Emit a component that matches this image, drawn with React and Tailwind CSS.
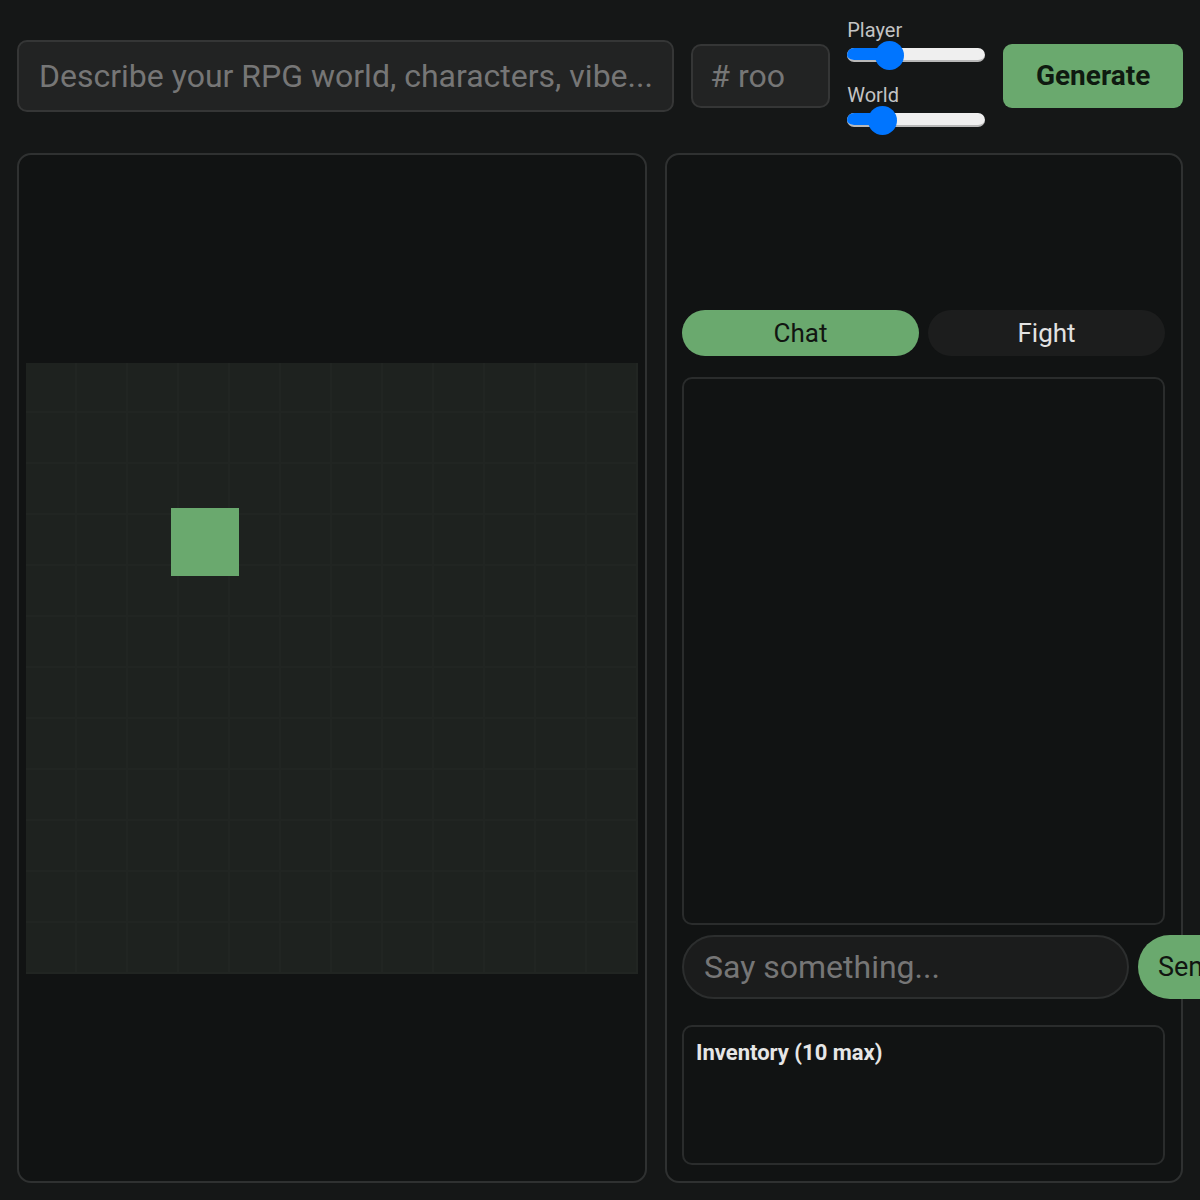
import React from 'react';

const font = { fontFamily: 'Roboto, "Noto Sans", sans-serif' };

function Slider({ label, pos }) {
    return (
        <div className="flex flex-col">
            <span className="text-[20px] leading-[22px] text-[#c4c4c4]">{label}</span>
            <div className="relative h-[28px] w-[138px] flex items-center">
                <div className="h-[14px] w-full rounded-full bg-[#efefef] border-b-2 border-[#b8b8b8] overflow-hidden">
                    <div className="h-full bg-[#0075ff]" style={{ width: pos }} />
                </div>
                <div
                    className="absolute top-0 h-[29px] w-[29px] rounded-full bg-[#0075ff]"
                    style={{ left: pos - 14 }}
                />
            </div>
        </div>
    );
}

export default function App() {
    const cells = Array.from({ length: 144 });

    return (
        <div className="w-[1200px] h-[1200px] bg-[#151717] px-[17px] overflow-hidden" style={font}>
            {/* Top bar */}
            <div className="mt-[17px] h-[118px] flex items-center">
                <input
                    className="w-[658px] h-[72px] rounded-[10px] bg-[#222323] border-2 border-[#353636] px-[20px] text-[32px] text-[#ddd] placeholder:text-[#767676] outline-none"
                    placeholder="Describe your RPG world, characters, vibe..."
                />
                <input
                    className="ml-[17px] w-[139px] h-[64px] rounded-[10px] bg-[#222323] border-2 border-[#353636] px-[17px] text-[32px] text-[#ddd] placeholder:text-[#767676] outline-none"
                    placeholder="# roo"
                />
                <div className="ml-[17px] w-[138px] flex flex-col gap-[15px]">
                    <Slider label="Player" pos={42} />
                    <Slider label="World" pos={35} />
                </div>
                <button className="ml-[18px] w-[180px] h-[64px] rounded-[9px] bg-[#6aa96e] text-[28px] font-bold text-[#0f1a10]">
                    Generate
                </button>
            </div>

            {/* Main panels */}
            <div className="mt-[18px] h-[1030px] flex gap-[18px]">
                {/* Map */}
                <div className="w-[630px] h-full rounded-[14px] border-2 border-[#2f3131] bg-[#111313] flex items-center px-[7px]">
                    <div className="relative w-full h-[611px] bg-[#1e221f] grid grid-cols-12 grid-rows-12">
                        {cells.map((_, i) => (
                            <div key={i} className="border-r-2 border-b-2 border-[#212522]" />
                        ))}
                        <div className="absolute left-[145px] top-[145px] w-[68px] h-[68px] bg-[#6aa96e]" />
                    </div>
                </div>

                {/* Side panel */}
                <div className="w-[518px] h-full rounded-[14px] border-2 border-[#2f3131] bg-[#111313] flex flex-col justify-end pl-[15px] pr-[16px] pb-[16px]">
                    <div className="flex gap-[9px]">
                        <button className="flex-1 h-[46px] rounded-full bg-[#6aa96e] text-[26px] text-[#111511]">Chat</button>
                        <button className="flex-1 h-[46px] rounded-full bg-[#1c1d1d] text-[26px] text-[#e2e2e2]">Fight</button>
                    </div>
                    <div className="mt-[21px] h-[548px] rounded-[10px] border-2 border-[#2a2c2c] bg-[#111313]" />
                    <div className="mt-[10px] flex gap-[9px]">
                        <input
                            className="w-[447px] shrink-0 h-[64px] rounded-full bg-[#1b1c1c] border-2 border-[#2c2e2e] px-[20px] text-[32px] text-[#ddd] placeholder:text-[#767676] outline-none"
                            placeholder="Say something..."
                        />
                        <button className="shrink-0 h-[64px] rounded-full bg-[#6aa96e] pl-[20px] pr-[24px] text-[27px] text-[#111511]">
                            Send
                        </button>
                    </div>
                    <div className="mt-[26px] h-[140px] rounded-[10px] border-2 border-[#2a2c2c] px-[12px] py-[9px]">
                        <p className="text-[22px] font-bold text-[#e6e6e6]">Inventory (10 max)</p>
                    </div>
                </div>
            </div>
        </div>
    );
}
